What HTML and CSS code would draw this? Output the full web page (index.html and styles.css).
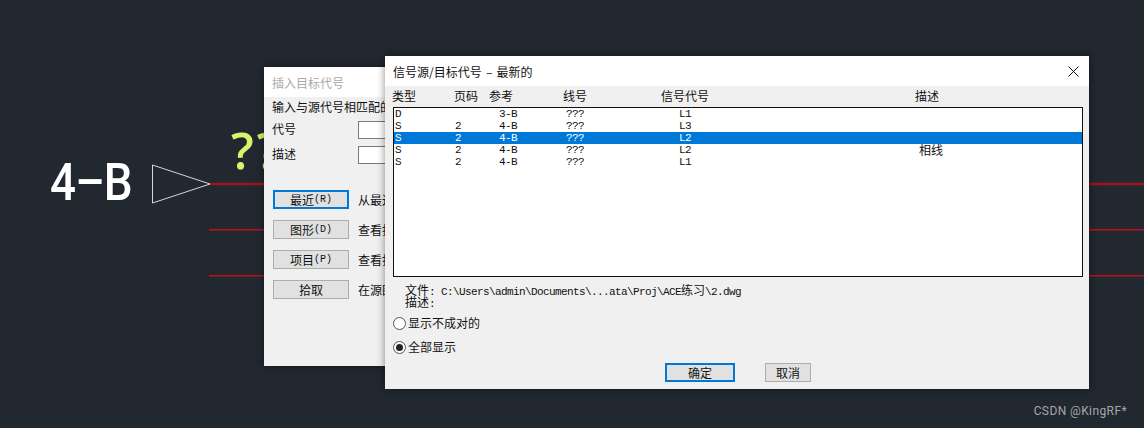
FILE: index.html
```html
<!DOCTYPE html>
<html>

<head>
    <meta charset="utf-8">
    <title>信号源/目标代号</title>
    <link rel="stylesheet" href="styles.css">
</head>

<body>
    <div id="desktop">
        <!-- cad drawing behind the dialogs -->
        <svg class="drawing" width="1144" height="428">
            <path d="M210 184H1144" stroke="#a0141c" stroke-width="2.500" fill="none"/>
            <path d="M209 229.750H1144M209 275.750H1144" stroke="#c0101a" stroke-width="1.500" fill="none"/>
            <path d="M152.500 165L210 184L152.500 203Z" stroke="#d6d8da" fill="#212830"/>
        </svg>
        <span class="tag">4–B</span>
        <span class="unknown">??</span>

        <div class="window back">
            <div class="titlebar">插入目标代号</div>
            <div class="back_body">
                <p class="hint">输入与源代号相匹配的目标代号</p>
                <div class="field"><span>代号</span><i class="input"></i></div>
                <div class="field"><span>描述</span><i class="input"></i></div>
                <div class="actions">
                    <div class="action"><span class="btn focus">最近<em>(R)</em></span><span>从最近使用的代号</span></div>
                    <div class="action"><span class="btn">图形<em>(D)</em></span><span>查看打开的图形</span></div>
                    <div class="action"><span class="btn">项目<em>(P)</em></span><span>查看打开的项目</span></div>
                    <div class="action"><span class="btn">拾取</span><span>在源图形中拾取</span></div>
                </div>
            </div>
        </div>

        <div class="window front">
            <div class="titlebar">
                <span class="front_title">信号源/目标代号 – 最新的</span>
                <svg class="close" width="11" height="11" viewBox="0 0 11 11">
                    <path d="M0.500 0.500L10.500 10.500M10.500 0.500L0.500 10.500" stroke="#111" fill="none"/>
                </svg>
            </div>
            <div class="columns">
                <span>类型</span><span>页码</span><span>参考</span><span>线号</span><span>信号代号</span><span>描述</span>
            </div>
            <div class="list">
                <div class="row"><span>D</span><span></span><span>3-B</span><span>???</span><span>L1</span><span></span></div>
                <div class="row"><span>S</span><span>2</span><span>4-B</span><span>???</span><span>L3</span><span></span></div>
                <div class="row selected"><span>S</span><span>2</span><span>4-B</span><span>???</span><span>L2</span><span></span></div>
                <div class="row"><span>S</span><span>2</span><span>4-B</span><span>???</span><span>L2</span><span class="cjk">相线</span></div>
                <div class="row"><span>S</span><span>2</span><span>4-B</span><span>???</span><span>L1</span><span></span></div>
            </div>
            <div class="file_info">
                <div><span class="cjk">文件</span>: C:\Users\admin\Documents\...ata\Proj\ACE<span class="cjk">练习</span>\2.dwg</div>
                <div><span class="cjk">描述</span>:</div>
            </div>
            <div class="radio"><i class="dot"></i>显示不成对的</div>
            <div class="radio on"><i class="dot"></i>全部显示</div>
            <div class="footer">
                <span class="btn focus ok">确定</span>
                <span class="btn cancel">取消</span>
            </div>
        </div>

        <span class="watermark">CSDN @KingRF*</span>
    </div>
</body>

</html>
```

FILE: styles.css
```css
:root {
    --bg: #212830;
    --panel: #f0f0f0;
    --blue: #0078d7;
}

html,
body {
    margin: 0;
    padding: 0;
}

body {
    background-color: var(--bg);
    font-family: "Noto Sans CJK SC", "Liberation Sans", sans-serif;
    font-size: 12px;
    color: #111;
}

#desktop {
    position: relative;
    width: 1144px;
    height: 428px;
    overflow: hidden;
}

.drawing {
    position: absolute;
    top: 0;
    left: 0;
}

.tag {
    position: absolute;
    left: 50px;
    top: 153px;
    font-family: "Roboto", sans-serif;
    font-size: 52px;
    font-weight: 500;
    line-height: 60px;
    letter-spacing: -1px;
    color: #fff;
    transform: scaleX(0.88);
    transform-origin: left;
}

.unknown {
    position: absolute;
    left: 231px;
    top: 120px;
    font-family: "Open Sans", sans-serif;
    font-size: 50px;
    line-height: 60px;
    font-weight: 600;
    letter-spacing: 3px;
    color: #d9f36b;
}

.window {
    position: absolute;
    background-color: var(--panel);
    box-shadow: 0 0 8px rgba(0, 0, 0, 0.45);
}

.titlebar {
    display: flex;
    align-items: center;
    justify-content: space-between;
    height: 30px;
    padding: 0 10px 0 8px;
    background-color: #fff;
}

.front_title {
    word-spacing: 1.5px;
}

/* back dialog, mostly hidden */
.back {
    left: 264px;
    top: 67px;
    width: 240px;
    height: 299px;
}

.back .titlebar {
    color: #a9a9a9;
}

.back_body {
    padding-left: 8px;
}

.hint {
    margin: 2px 0 0;
    line-height: 16px;
    white-space: nowrap;
}

.field {
    display: flex;
    align-items: center;
    height: 18px;
    margin-top: 6px;
}

.field span {
    width: 86px;
    padding-bottom: 3px;
}

.field + .field {
    margin-top: 7px;
}

.input {
    width: 60px;
    height: 16px;
    background-color: #fff;
    border: 1px solid #7a7a7a;
}

.actions {
    display: flex;
    flex-direction: column;
    gap: 11px;
    margin: 26px 0 0 1px;
}

.action {
    display: flex;
    align-items: center;
    gap: 9px;
    white-space: nowrap;
}

.btn {
    display: flex;
    align-items: center;
    justify-content: center;
    box-sizing: border-box;
    width: 76px;
    height: 19px;
    background-color: #e1e1e1;
    border: 1px solid #adadad;
    line-height: 16px;
}

.btn em {
    font-family: "Liberation Mono", monospace;
    font-size: 10px;
    font-style: normal;
}

.btn.focus {
    border: 2px solid var(--blue);
}

/* front dialog */
.front {
    left: 385px;
    top: 56px;
    width: 704px;
    height: 333px;
}

.columns {
    display: grid;
    grid-template-columns: 62px 35px 74px 98px 254px auto;
    height: 21px;
    padding-left: 7px;
    line-height: 20px;
}

.list {
    box-sizing: border-box;
    width: 690px;
    height: 170px;
    margin-left: 8px;
    background-color: #fff;
    border: 1px solid #111;
}

.row {
    display: grid;
    grid-template-columns: 60px 44px 67px 113px 240px auto;
    height: 12px;
    padding-left: 1px;
    font-family: "Liberation Mono", monospace;
    font-size: 11px;
    line-height: 13px;
    letter-spacing: -0.6px;
}

.row.selected {
    background-color: var(--blue);
    color: #fff;
}

.row .cjk {
    font-family: "Noto Sans CJK SC", sans-serif;
    font-size: 12px;
    line-height: 12px;
    letter-spacing: 0;
}

.file_info {
    margin: 7px 0 0 20px;
    font-family: "Liberation Mono", "Noto Sans CJK SC", monospace;
    font-size: 11px;
    line-height: 12px;
    letter-spacing: -0.6px;
    white-space: nowrap;
}

.file_info div {
    height: 12px;
}

.file_info .cjk {
    font-family: "Noto Sans CJK SC", sans-serif;
    font-size: 12px;
    letter-spacing: 0;
}

.radio {
    display: flex;
    align-items: center;
    height: 14px;
    margin: 8px 0 0 8px;
    line-height: 14px;
}

.radio + .radio {
    margin-top: 10px;
}

.dot {
    display: flex;
    align-items: center;
    justify-content: center;
    box-sizing: border-box;
    width: 13px;
    height: 13px;
    margin-right: 2px;
    background-color: #fff;
    border: 1px solid #555;
    border-radius: 50%;
}

.radio.on .dot::after {
    content: "";
    width: 7px;
    height: 7px;
    background-color: #222;
    border-radius: 50%;
}

.footer {
    display: flex;
    gap: 30px;
    margin: 9px 0 0 280px;
}

.ok {
    width: 70px;
}

.cancel {
    width: 46px;
}

.watermark {
    position: absolute;
    right: 17px;
    top: 403px;
    font-family: "Roboto", sans-serif;
    font-size: 12px;
    line-height: 16px;
    letter-spacing: 0.4px;
    color: #a4a7aa;
}
```
